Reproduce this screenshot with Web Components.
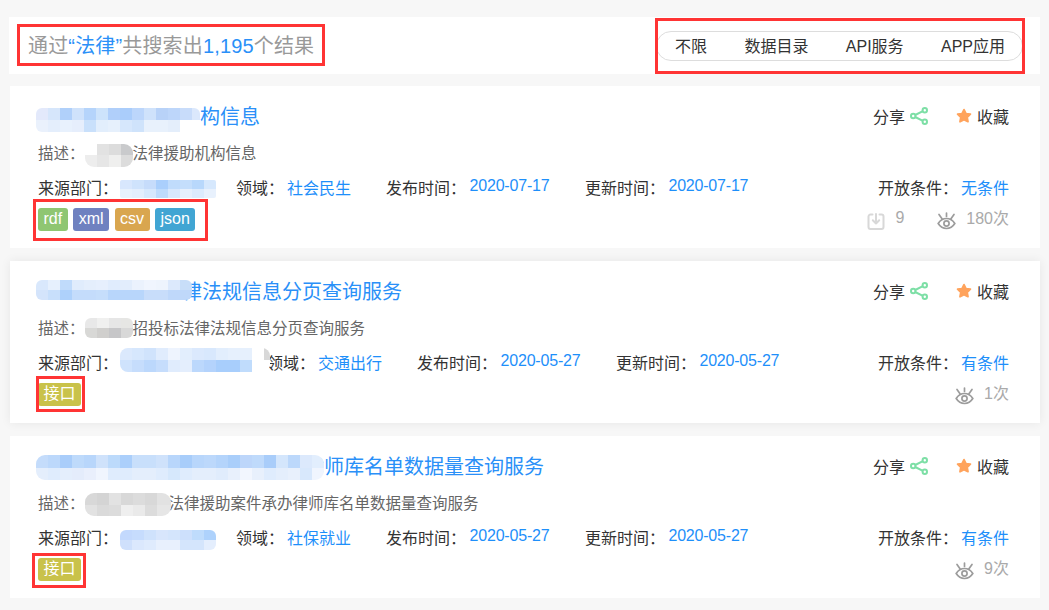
<!DOCTYPE html>
<html lang="zh-CN">
<head>
<meta charset="utf-8">
<title>搜索结果</title>
<style>
  html, body { margin: 0; background: #f7f7f7; }
  body { font-family: "Liberation Sans", "Noto Sans CJK SC", sans-serif; }
</style>
</head>
<body>
<search-page>
  <result-bar>
    <span>通过<b>“法律”</b>共搜索出<b>1,195</b>个结果</span>
    <filter-tabs slot="tabs" items="不限,数据目录,API服务,APP应用"></filter-tabs>
  </result-bar>

  <result-card field="社会民生" published="2020-07-17" updated="2020-07-17" condition="无条件" downloads="9" views="180次" dept-gap="20">
    <mosaic-patch slot="title-mask" cell-h="12" width="164" shift="5" radius="6"
      rows="e3e9fb d6e6fb b0d0fa cfe2fb b5d4fb cde3fb b0cffa aacdfb bcd6fb cfe2fb b8d2f8 bdd6fa c8dcfa dbe8fc|eaf1fc e4eefc e8f1fd e6eefc c9e0fb e2eefc e6f0fc d6e7fc cfe3fb e8f1fc e8f1fc e4eefb ffffff ffffff"></mosaic-patch>
    <span slot="title">构信息</span>
    <mosaic-patch slot="desc-mask" cell-h="11.5" shift="2" radius="9"
      rows="ffffff e2e2e2 dcdcdc c9cacc|ededed e6e6e6 efefee dcdcdc"></mosaic-patch>
    <span slot="desc">法律援助机构信息</span>
    <mosaic-patch slot="dept" cell-h="9" shift="1" radius="2"
      rows="d8e7fd cfe3fc c6dcfb aacffc c0dcfc c4defc b8d8fc d6e8fd|e7f1fd e3eefd d6e8fd bedbfc d8e8fd e6f0fd dcebfd e8f1fd"></mosaic-patch>
    <format-tag slot="tags" color="#8fc672">rdf</format-tag>
    <format-tag slot="tags" color="#6f81c0">xml</format-tag>
    <format-tag slot="tags" color="#d9a64f">csv</format-tag>
    <format-tag slot="tags" color="#41a5d3">json</format-tag>
  </result-card>

  <result-card class="hover" field="交通出行" published="2020-05-27" updated="2020-05-27" condition="有条件" views="1次" dept-gap="-3">
    <mosaic-patch slot="title-mask" cell-h="10" overlap="10" radius="6"
      rows="d9e8fc e6f0fd c0dbfb e0ecfc e4eefc e6effd e0ecfd e2edfc ebf2fd f0f5fe eef4fd dce9fc c8def9|d4e4fb c8dffb aed1fb c4dcfb c4dcfb c6defb b8d6fb b8d6fb b8d6fb c8ddfa c8ddfa bfd8fa bfd8fa"></mosaic-patch>
    <span slot="title">律法规信息分页查询服务</span>
    <mosaic-patch slot="desc-mask" cell-h="10" radius="6"
      rows="e8e8e8 f0f0ef e6e6e6 e6e6e4|d8d8d6 d0cfcd c6c6c8 d8d8d8"></mosaic-patch>
    <span slot="desc">招投标法律法规信息分页查询服务</span>
    <mosaic-patch slot="dept" cell-h="12" width="150" shift="-3" radius="8"
      rows="dbe9fd d6e7fd d0e3fc e0ecfd eef4fe e2eefd dbe9fd d8e8fd e2eefd e6f0fd e6f0fd ffffff d8d8d8|cfe3fd c6ddfc bcd8fc c6ddfc e0ecfd e4eefd bcd8fc b4d3fc a8cefc a8cefc c0dcfc ffffff ffffff"></mosaic-patch>
    <format-tag slot="tags" color="#c9c24a">接口</format-tag>
  </result-card>

  <result-card field="社保就业" published="2020-05-27" updated="2020-05-27" condition="有条件" views="9次" dept-gap="20">
    <mosaic-patch slot="title-mask" cell-h="12.5" overlap="20" shift="2.5" radius="9"
      rows="c4dcfb bcd8fb a9cdfa bedafb b8d6fb cfe2fb bcdafb abcffb c8dffb c8dffb cfe2fb b8d6fb a8cdfa b8d6fb bcd8fb b4d4fb a9cefa bdd6fa bfdafb a9cdfa d4e6fc bcd8fb dce9fc e2eefd|e4eefc dfecfd e4eefc e4ecfb e9effc f0f5fe dfecfd dfecfd e4eefc e4eefc dfecfd d6e8fc dfecfd e4eefc e4eefc e0ecfc e8f0fc f2f6fe e8f0fc dfecfd e4eefc e8f0fc d8e8fc f0f5fe"></mosaic-patch>
    <span slot="title">律师库名单数据量查询服务</span>
    <mosaic-patch slot="desc-mask" cell-h="11.5" width="86" overlap="2" shift="1.5" radius="9"
      rows="d8d8d8 d4d4d4 e2e2e2 d8d8d8 dcdcdc d8d8d8 e2e2e2 e2e2e2|e2e2e2 dadada dcdcdc efefef eaeaea dcdcdc e6e6e6 e6e6e6"></mosaic-patch>
    <span slot="desc">法律援助案件承办律师库名单数据量查询服务</span>
    <mosaic-patch slot="dept" cell-h="10" shift="2" radius="6"
      rows="c3d9fd c6dcfd cfe2fc d8e6fc d4e5fc cde0fc bfdcfc aed2fc|cfe0fc dbe8fd dfebfd e8f0fd e8f0fd d4e5fc d4e5fc e4eefd"></mosaic-patch>
    <format-tag slot="tags" color="#c9c24a">接口</format-tag>
  </result-card>

  <annot-box style="left:17px;top:24px;width:308px;height:42px"></annot-box>
  <annot-box style="left:655px;top:18px;width:370px;height:56px"></annot-box>
  <annot-box style="left:33px;top:199px;width:175px;height:42px"></annot-box>
  <annot-box style="left:36px;top:376px;width:49px;height:36px"></annot-box>
  <annot-box style="left:32px;top:553px;width:54px;height:35px"></annot-box>
</search-page>

<script>
// Shadow root helper, every element below keeps its own styles
class BaseEl extends HTMLElement {
  render(html) {
    if (!this.shadowRoot) this.attachShadow({ mode: 'open' });
    this.shadowRoot.innerHTML = html;
  }
}

class SearchPage extends BaseEl {
  connectedCallback() {
    this.render(`
      <style>
        :host { display: block; position: relative; height: 610px; overflow: hidden; background: #f7f7f7; }
        .list { display: flex; flex-direction: column; gap: 13px; padding: 17px 9px 0 10px; }
      </style>
      <div class="list"><slot></slot></div>`);
  }
}

class ResultBar extends BaseEl {
  connectedCallback() {
    this.render(`
      <style>
        :host {
          display: flex; align-items: center; justify-content: space-between;
          height: 57px; margin: 0 0 -1px -1px; padding: 0 17px 0 19px; box-sizing: border-box;
          background: #fff; color: #999; font-size: 20px;
        }
        ::slotted(span) { white-space: nowrap; margin-bottom: 2px; letter-spacing: .16px; }
      </style>
      <slot></slot><slot name="tabs"></slot>`);
    this.querySelectorAll('b').forEach(b => {
      b.style.fontWeight = 'normal';
      b.style.color = '#2a90f8';
    });
  }
}

class FilterTabs extends BaseEl {
  connectedCallback() {
    const items = this.getAttribute('items').split(',');
    this.render(`
      <style>
        :host {
          display: flex; gap: 37.4px; height: 30px; padding: 0 17px 0 18px; box-sizing: border-box;
          align-items: center; border: 1px solid #ddd; border-radius: 15px;
          background: #fff; color: #333; font-size: 16px; white-space: nowrap;
        }
        span { margin-bottom: 2px; }
      </style>
      ${items.map(t => `<span>${t}</span>`).join('')}`);
  }
}

// Pixelated block that hides masked text, one "|" separated row per line of cells
class MosaicPatch extends BaseEl {
  connectedCallback() {
    const rows = this.getAttribute('rows').split('|').map(r => r.trim().split(/\s+/));
    const h = this.getAttribute('cell-h') || 12;
    const overlap = this.getAttribute('overlap') || 0;
    const radius = this.getAttribute('radius') || 0;
    const width = this.getAttribute('width');
    const shift = parseFloat(this.getAttribute('shift') || 0);
    this.render(`
      <style>
        :host {
          display: grid; position: relative; z-index: 1; flex: none;
          grid-template-columns: repeat(${rows[0].length}, 12px);
          grid-auto-rows: ${h}px;
          ${width ? `width: ${width}px;` : ''}
          margin-right: -${overlap}px;
          margin-top: ${Math.max(shift, 0) * 2}px;
          margin-bottom: ${Math.max(-shift, 0) * 2}px;
          border-radius: ${radius}px; overflow: hidden;
        }
      </style>
      ${rows.flat().map(c => `<i style="background:#${c}"></i>`).join('')}`);
  }
}

class FormatTag extends BaseEl {
  connectedCallback() {
    this.render(`
      <style>
        :host {
          display: block; height: 23px; padding: 0 5.5px; line-height: 22px; border-radius: 3px;
          background: ${this.getAttribute('color')}; color: #fff; font-size: 16px;
        }
      </style>
      <slot></slot>`);
  }
}

const ICON_SHARE = `<svg width="18" height="18" viewBox="0 0 18 18" fill="none" stroke="#7ddfa6" stroke-width="2"><circle cx="14.800" cy="3.200" r="2.200"/><circle cx="14.800" cy="14.800" r="2.200"/><circle cx="3.200" cy="9" r="2.200"/><path d="M12.900 4.200 5.200 8M5.200 10l7.700 3.800"/></svg>`;
const ICON_STAR = `<svg width="16" height="16" viewBox="0 0 16 16"><path d="M8 1.600 10 5.600l4.400.6-3.200 3.100.8 4.400L8 11.600l-4 2.100.8-4.400L1.600 6.200 6 5.600z" fill="#ffa35c" stroke="#ffa35c" stroke-width="1.800" stroke-linejoin="round"/></svg>`;
const ICON_DOWN = `<svg width="18" height="18" viewBox="0 0 18 18" fill="none" stroke="#d8d8d8" stroke-width="2" stroke-linecap="round" stroke-linejoin="round"><path d="M5.500 2.500H3.500a2 2 0 0 0-2 2V15a2 2 0 0 0 2 2h11a2 2 0 0 0 2-2V4.500a2 2 0 0 0-2-2h-2"/><path d="M9 2v9.500M5.800 8.300 9 11.500l3.200-3.200"/></svg>`;
const ICON_EYE = `<svg width="19" height="18" viewBox="0 0 19 18" fill="none" stroke="#9c9c9c" stroke-width="1.700" stroke-linecap="round"><path d="M1.200 11.500C3.400 8 6.200 6.500 9.500 6.500s6.100 1.500 8.300 5c-2.200 3.500-5 5-8.300 5s-6.100-1.500-8.300-5z"/><circle cx="9.500" cy="11.500" r="2.600"/><path d="M2 2.500l3.200 4.500M9.500 1v3.500M17 2.500l-3.200 4.500"/></svg>`;

class ResultCard extends BaseEl {
  connectedCallback() {
    const a = n => this.getAttribute(n) || '';
    const downloads = a('downloads')
      ? `<span class="ico">${ICON_DOWN}</span><span class="num">${a('downloads')}</span>` : '';
    this.render(`
      <style>
        :host {
          display: flex; justify-content: space-between; height: 162px; box-sizing: border-box;
          padding: 14px 31px 0 28px; background: #fff; font-size: 16px; color: #333; white-space: nowrap;
        }
        :host(.hover) { box-shadow: 0 0 10px rgba(0, 0, 0, .07); }
        .title, .desc, .meta, .actions, .cond, .stats { display: flex; align-items: center; }
        .up, ::slotted([slot="desc"]) { margin-bottom: 2px; }
        .title { height: 30px; margin-left: -2px; font-size: 20px; color: #2a90f8; }
        .desc { height: 20px; margin-top: 13px; font-size: 15.5px; color: #666; }
        .meta { height: 20px; margin-top: 15px; }
        ::slotted([slot="dept"]) { margin-left: 2px; margin-right: ${a('dept-gap')}px; }
        .val { margin-left: 3px; margin-right: 35px; color: #1e8ffa; }
        .date { margin-left: 3.5px; margin-right: 35.5px; margin-bottom: 4px; letter-spacing: -.2px; }
        .tags { display: flex; gap: 5.5px; margin-top: 10px; }
        .side { display: flex; flex-direction: column; align-items: flex-end; }
        .actions { height: 34px; }
        .actions svg { display: block; margin-bottom: 3px; }
        .share { margin-left: 5px; margin-right: 28px; }
        .star { margin-right: 5px; }
        .cond { height: 20px; margin-top: 44px; }
        .cond b { font-weight: normal; margin-left: 3px; color: #1e8ffa; }
        .stats { height: 20px; margin-top: 10px; color: #aaa; }
        .ico { display: block; height: 18px; margin-top: 5px; }
        .num { margin-left: 10px; margin-right: 33px; }
        .views { margin-left: 10px; margin-bottom: 3px; }
      </style>
      <div class="main">
        <div class="title"><slot name="title-mask"></slot><slot name="title"></slot></div>
        <div class="desc"><span class="up">描述：</span><slot name="desc-mask"></slot><slot name="desc"></slot></div>
        <div class="meta">
          <span class="up">来源部门：</span><slot name="dept"></slot>
          <span class="up">领域：</span><span class="val up">${a('field')}</span>
          <span class="up">发布时间：</span><span class="val date">${a('published')}</span>
          <span class="up">更新时间：</span><span class="val date">${a('updated')}</span>
        </div>
        <div class="tags"><slot name="tags"></slot></div>
      </div>
      <div class="side">
        <div class="actions">
          <span class="up">分享</span><span class="share">${ICON_SHARE}</span>
          <span class="star">${ICON_STAR}</span><span class="up">收藏</span>
        </div>
        <div class="cond"><span class="up">开放条件：</span><b class="up">${a('condition')}</b></div>
        <div class="stats">
          ${downloads}
          <span class="ico">${ICON_EYE}</span><span class="views">${a('views')}</span>
        </div>
      </div>`);
  }
}

// Red annotation frame drawn over the screenshot
class AnnotBox extends BaseEl {
  connectedCallback() {
    this.render(`
      <style>
        :host {
          display: block; position: absolute; z-index: 5; box-sizing: border-box;
          border: 3px solid #ff3434; pointer-events: none;
        }
      </style>`);
  }
}

customElements.define('search-page', SearchPage);
customElements.define('result-bar', ResultBar);
customElements.define('filter-tabs', FilterTabs);
customElements.define('mosaic-patch', MosaicPatch);
customElements.define('format-tag', FormatTag);
customElements.define('result-card', ResultCard);
customElements.define('annot-box', AnnotBox);
</script>
</body>
</html>
